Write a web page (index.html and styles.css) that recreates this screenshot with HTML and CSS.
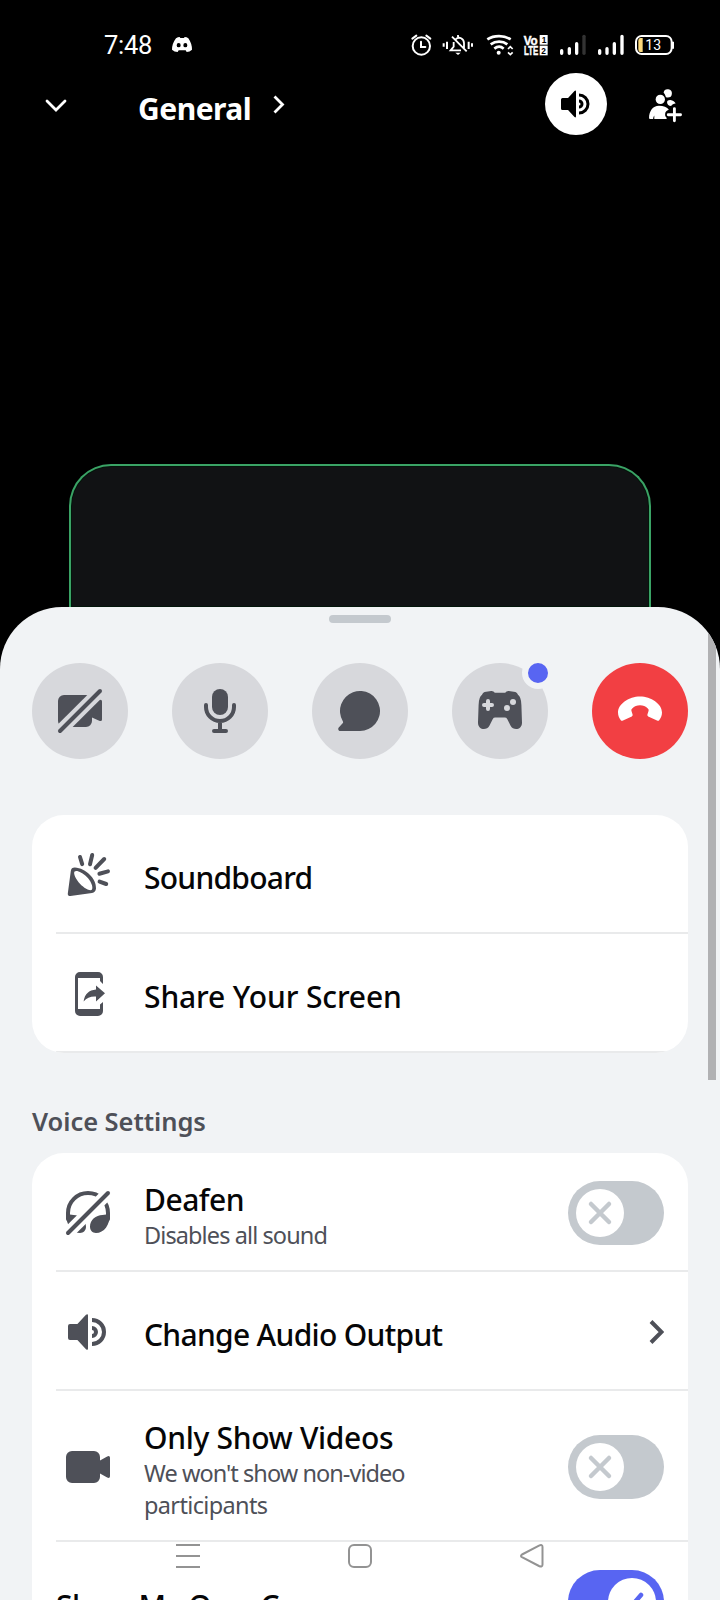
FILE: index.html
```html
<!DOCTYPE html>
<html lang="en">
<head>
<meta charset="utf-8">
<title>Voice channel</title>
<link rel="stylesheet" href="styles.css">
</head>
<body>
<div class="screen">
  <div class="status-bar">
    <span class="clock">7:48</span>
    <svg class="discord" width="20" height="15" viewBox="0 0 60 45"><path fill="#fff" fill-rule="evenodd" d="M12 4 Q18 0 23 0 L25 3 H36 L38 0 Q44 0 49 4 Q60 20 60 38 Q53 45 44 45L41 40H20L17 45Q7 45 0 38Q0 20 12 4ZM20 18a6 6.500 0 0 0 0 13a6 6.500 0 0 0 0-13ZM40 18a6 6.500 0 0 0 0 13a6 6.500 0 0 0 0-13Z"/></svg>
    <svg class="status-icons" width="290" height="50" viewBox="0 0 870 150" fill="none" stroke="#fff" stroke-width="6">
      <circle cx="64" cy="78" r="26"/><path d="M63 65v16h13M37 56l12-9M91 56l-12-9" stroke-linecap="round"/>
      <path d="M131 70v10M141 65v22M206 65v22M216 70v10"/>
      <path d="M156 50l44 44M161 66v14l-9 11h31M167 58c10-10 25-3 25 12v14M174 45v6" stroke-width="5.500"/><path d="M166 98h16l-8 7z" fill="#fff" stroke="none"/>
      <path d="M262 58c20-13 50-13 70 0M272 73c15-11 36-11 50 0M283 86c9-7 20-7 28 0" stroke-width="8"/><circle cx="296" cy="98" r="6" fill="#fff" stroke="none"/>
      <path d="M324 87l7-7l7 7M324 97l7 7l7-7" stroke-width="5"/>
      <g fill="#fff" stroke="#fff" stroke-width="1.500" class="volte">
        <text x="371" y="74" font-size="40" textLength="42" lengthAdjust="spacingAndGlyphs">Vo</text>
        <text x="372" y="106" font-size="40" textLength="43" lengthAdjust="spacingAndGlyphs">LTE</text>
        <g stroke="none"><rect x="419" y="45" width="24" height="29"/><rect x="419" y="77" width="24" height="29"/></g>
        <g fill="#000" stroke="none"><text x="425" y="69" font-size="25">1</text><text x="424" y="101" font-size="25">2</text></g>
      </g>
      <g stroke-width="10" stroke-linecap="round"><path d="M485 92v8M508 86v14M530 71v29"/><path d="M552 49v51" stroke="#333"/><path d="M599 92v8M621 86v14M643 71v29M666 49v51"/></g>
      <rect x="708" y="48" width="107" height="54" rx="17" stroke-width="6"/><path d="M819 65v21" stroke-width="6"/>
      <path d="M728 54h-6q-7 0-7 10v22q0 10 7 10h6z" fill="#fbd97c" stroke="none"/>
      <text class="battery" x="736" y="90" font-size="42" fill="#fff" stroke="none">13</text>
    </svg>
  </div>

  <header class="header">
    <svg class="down" width="22" height="14" viewBox="0 0 22 14"><path d="M2 2l9 9l9-9" fill="none" stroke="#fff" stroke-width="2.800" stroke-linecap="round"/></svg>
    <h1 class="channel">General</h1>
    <svg class="more" width="12" height="19" viewBox="0 0 12 19"><path d="M1.500 1.500l8 8l-8 8" fill="none" stroke="#fff" stroke-width="2.800"/></svg>
    <div class="output">
      <svg width="36" height="36" viewBox="0 0 24 24"><path d="M3 8h3.700l4.300-4.600q1-.8 1 .4v16.400q0 1.200-1 .4L6.700 16H3q-1 0-1-1V9q0-1 1-1Z"/><path d="M14 6a6 6 0 0 1 0 12M14 10a2 2 0 0 1 0 4" fill="none" stroke="#000" stroke-width="2"/></svg>
    </div>
    <svg class="invite" width="36" height="36" viewBox="0 0 24 24" fill="#fff"><circle cx="8.200" cy="7.600" r="3.100"/><path d="M10.400 3a2.800 2.800 0 1 1 2.700 3.400q-.6 0-1.200-.4Q11.400 4 10.400 3ZM12.700 9.500c0-1 1-1.600 2.200-1.500c1.800.2 3 1.200 3.500 2.400c-1.300 0-2.300.6-3 1.600c-1.500 0-2.700-1-2.700-2.500ZM7.300 11.800c3 0 5.500.8 6.600 2.700c-1.700.4-2.500 1.600-2.500 3.200c0 1 .3 1.500 1 2.100v.9H4.200v-2.300q-.7 1-.8 2.300H1.400q-.7 0-.7-.7c0-4.500 2.500-8.200 6.600-8.200Z"/><path d="M17.600 13.700v8.200M13.500 17.800h8.200" stroke="#fff" stroke-width="1.900" stroke-linecap="round"/></svg>
  </header>

  <div class="tile"></div>

  <main class="sheet">
    <div class="handle"></div>
    <div class="actions">
      <button class="action"><svg class="icon" viewBox="0 0 24 24"><mask id="cut"><path fill="#fff" d="M0 0h24v24H0z"/><path d="M0 24L24 0" stroke="#000" stroke-width="6.100"/></mask><path mask="url(#cut)" d="M4 4h11a3 3 0 0 1 3 3v1.800l3.600-2.300q1.400-.5 1.400.7v9q0 1.200-1.400.7L18 15.300V17a3 3 0 0 1-3 3H4a3 3 0 0 1-3-3V7a3 3 0 0 1 3-3Z"/><path class="line" d="M2 22L22 2"/></svg></button>
      <button class="action"><svg class="icon" viewBox="0 0 24 24"><rect x="8" y="1" width="8" height="13" rx="4"/><path class="line" d="M5 9v1a7 7 0 0 0 14 0V9M12 18v4M9 22h6"/></svg></button>
      <button class="action"><svg class="icon" viewBox="0 0 24 24"><path d="M12 22a10 10 0 1 0-8.600-4.900q.4.700-.2 1.200L1.500 20.100C.7 20.900 1.200 22 2.200 22Z"/></svg></button>
      <button class="action"><svg class="icon" viewBox="0 0 24 24"><path d="M4.300 2.500L7.600 2Q8.800 1.900 9.400 2.900H14.600Q15.200 1.900 16.400 2L19.700 2.500Q20.600 2.800 21 3.900Q22.600 5 22.700 9L23 17.800C23.100 21.600 18.600 22 17.300 19.400L15.600 16Q15.200 15.300 14.400 15.300H9.600Q8.800 15.300 8.400 16L6.700 19.400C5.400 22 .9 21.600 1 17.800L1.300 9Q1.400 5 3 3.900Q3.400 2.800 4.300 2.500Z"/><path d="M6 7v4M4 9h4" stroke="#d7d8dc" stroke-width="2" stroke-linecap="round"/><circle cx="18.500" cy="7.500" r="1.500" fill="#d7d8dc"/><circle cx="15.500" cy="10.500" r="1.500" fill="#d7d8dc"/></svg><span class="badge"></span></button>
      <button class="action hangup"><svg class="icon" viewBox="0 0 24 24"><path d="M12 4.800C17.500 4.800 23 8.500 23 12.800C23 14.300 22.400 15.600 21.600 16.600Q21.200 17.100 20.500 16.800L16.100 14.700Q15.500 14.400 15.700 13.800L16.300 11.900Q16.500 11.200 15.900 10.700Q14.300 9.100 12 9.100Q9.700 9.100 8.100 10.700Q7.500 11.200 7.700 11.900L8.300 13.800Q8.500 14.400 7.900 14.700L3.500 16.800Q2.800 17.100 2.400 16.600C1.600 15.600 1 14.300 1 12.800C1 8.500 6.500 4.800 12 4.800Z"/></svg></button>
    </div>

    <section class="card">
      <div class="row">
        <svg class="icon" viewBox="0 0 24 24"><path fill-rule="evenodd" d="M3.400 10Q3.600 8.300 5.400 8.300C11 8.600 16.300 14 16 18.800Q15.800 20.800 14 21L3.200 22.500Q1.800 22.500 1.900 21.200ZM5.300 10.300C4.500 11.200 5.900 14.300 8.100 16.500C10.600 19.100 13.400 20.300 14 19.200C14.700 18 13.400 14.900 11.300 12.900C9.300 10.800 6.200 9.400 5.300 10.300Z"/><path class="line" d="M8 3l1.100 3.600M14.100 2l-1.100 4.600M20.100 4l-4.300 4.400M22 10.200l-4.300 1.200M21.100 16.500l-3.300-1.200"/></svg>
        <span class="label soundboard">Soundboard</span>
      </div>
      <div class="row">
        <svg class="icon" viewBox="0 0 24 24"><path d="M8 1h9a2.500 2.500 0 0 1 2.500 2.500V7L18 5.500V4H7v15.500h11v-2.200L19.500 16v4.500A2.500 2.500 0 0 1 17 23H8a2.500 2.500 0 0 1-2.500-2.500v-17A2.500 2.500 0 0 1 8 1Z"/><path d="M20.500 11.600L16 15.800v-2.500Q12.200 13 9.800 15.700C10.300 12 12.500 10 16 9.700v-2Z"/></svg>
        <span class="label share">Share Your Screen</span>
      </div>
    </section>

    <h2 class="heading">Voice Settings</h2>
    <section class="card">
      <div class="row">
        <svg class="icon" viewBox="0 0 24 24"><g mask="url(#cut)"><path d="M2 15v-3a10 10 0 0 1 20 0v3" class="line"/><path d="M23 12.500C23 18 20 22 16 22C14.200 22 13 20.700 13 18.900C13 15.500 16 13 19.200 13ZM1 12.500C1 18 4 22 8 22C9.800 22 11 20.700 11 18.900C11 15.500 8 13 4.800 13Z"/></g><path class="line" d="M2 22L22 2"/></svg>
        <div class="text"><span class="label deafen">Deafen</span><span class="note deafen-note">Disables all sound</span></div>
        <span class="toggle"><span class="knob"><svg width="48" height="48" viewBox="0 0 48 48"><path d="M15 15l18 18M33 15l-18 18"/></svg></span></span>
      </div>
      <div class="row">
        <svg class="icon" viewBox="0 0 24 24"><path d="M3 8h3.700l4.300-4.600q1-.8 1 .4v16.400q0 1.200-1 .4L6.700 16H3q-1 0-1-1V9q0-1 1-1Z"/><path d="M14 6a6 6 0 0 1 0 12M14 10a2 2 0 0 1 0 4" fill="none" stroke="#4e5058" stroke-width="2"/></svg>
        <span class="label audio">Change Audio Output</span>
        <svg class="chevron" width="16" height="26" viewBox="0 0 16 26"><path d="M3 2.500l10.500 10.500L3 23.500" fill="none" stroke="#4e5058" stroke-width="4"/></svg>
      </div>
      <div class="row tall">
        <svg class="icon" viewBox="0 0 24 24"><path d="M4 4h11a3 3 0 0 1 3 3v1.800l3.600-2.100q1.400-.5 1.400.7v9.200q0 1.200-1.400.7L18 15.300V17a3 3 0 0 1-3 3H4a3 3 0 0 1-3-3V7a3 3 0 0 1 3-3Z"/></svg>
        <div class="text"><span class="label videos">Only Show Videos</span><span class="note videos-note">We won't show non-video<br><span class="second">participants</span></span></div>
        <span class="toggle"><span class="knob"><svg width="48" height="48" viewBox="0 0 48 48"><path d="M15 15l18 18M33 15l-18 18"/></svg></span></span>
      </div>
      <div class="row last">
        <span class="label camera">Show My Own Camera</span>
        <span class="toggle on"><span class="knob"><svg width="48" height="48" viewBox="0 0 48 48"><path d="M14 25l6 7L33 17"/></svg></span></span>
      </div>
    </section>
    <div class="scrollbar"></div>
  </main>

  <nav class="nav">
    <svg width="26" height="26" viewBox="0 0 26 26"><path d="M1 2h24M1 13h24M1 24h24"/></svg>
    <svg width="26" height="26" viewBox="0 0 26 26"><rect x="2" y="2" width="22" height="22" rx="5"/></svg>
    <svg width="26" height="26" viewBox="0 0 26 26"><path d="M3 11.500L20 2.600q3.500-1.600 3.500 1.400v17.500q0 3-3.500 1.500L3 14.200q-2-1.200 0-2.700Z"/></svg>
  </nav>
</div>
</body>
</html>
```
FILE: styles.css
```css
* { box-sizing: border-box; }
body { margin: 0; background: #000; font-family: "Noto Sans", sans-serif; }
.screen { position: relative; width: 720px; height: 1600px; overflow: hidden; background: #000; }

.status-bar { display: flex; height: 73px; color: #fff; }
.clock { width: 68px; margin: 30px 0 0 104px; font: 400 25.500px/31px Roboto, sans-serif; letter-spacing: -.3px; }
.discord { margin-top: 37px; }
.status-icons { margin: 20px 0 0 208px; }
.volte { font-family: "Liberation Sans", sans-serif; font-weight: bold; }
.battery { font-family: Roboto, sans-serif; font-weight: 400; }

.header { display: flex; height: 62px; color: #fff; }
.down { margin: 26px 0 0 45px; }
.channel { width: 135px; margin: 16px 0 0 71px; font-size: 30px; line-height: 40px; font-weight: 700; letter-spacing: -.5px; }
.more { margin-top: 22px; }
.output { display: flex; width: 62px; height: 62px; margin-left: 260px; padding: 13px; border-radius: 50%; background: #fff; }
.invite { margin: 15px 0 0 41px; }

.tile { width: 582px; height: 143px; margin: 329px 0 0 69px; border: 2px solid #3aa365; border-bottom: 0; border-radius: 42px 42px 0 0; background: #111214; box-shadow: inset 0 0 0 1px #03150a; }

.sheet { position: relative; height: 993px; padding: 8px 32px 0; overflow: hidden; border-radius: 62px 62px 0 0; background: #f1f3f5; }
.handle { width: 62px; height: 8px; margin: 0 auto 40px; border-radius: 4px; background: #c4c9ce; }
.actions { display: flex; justify-content: space-between; margin-bottom: 56px; }
.action { position: relative; display: flex; width: 96px; height: 96px; padding: 24px; border: 0; border-radius: 50%; background: #d7d8dc; }
.icon { width: 48px; height: 48px; flex: none; fill: #4e5058; }
.line { fill: none; stroke: #4e5058; stroke-width: 2; stroke-linecap: round; }
.hangup { background: #f23f43; }
.hangup .icon { fill: #fff; }
.badge { position: absolute; top: -6px; right: -6px; width: 32px; height: 32px; border: 6px solid #f1f3f5; border-radius: 50%; background: #5865f2; }

.card { padding-left: 24px; overflow: hidden; border-radius: 32px; background: #fff; }
.row { display: flex; align-items: center; height: 119px; padding: 2px 24px 0 8px; border-bottom: 2px solid #e9eaeb; }
.row .icon { margin-right: 32px; }
.text { display: flex; flex-direction: column; padding-top: 6px; }
.label { color: #060607; font-size: 30px; line-height: 38px; font-weight: 500; white-space: nowrap; }
.note { color: #4e5058; font-size: 23.500px; line-height: 32px; white-space: nowrap; }
.row > .label { padding-top: 6px; }
.soundboard { letter-spacing: -.75px; }
.share { letter-spacing: -.12px; }
.deafen { letter-spacing: -.5px; }
.deafen-note { letter-spacing: -.9px; }
.audio { letter-spacing: -.69px; }
.videos { letter-spacing: -.32px; }
.videos-note { letter-spacing: -.95px; }
.second { letter-spacing: -.65px; }
.heading { margin: 51px 0 15px; color: #4e5058; font-size: 25.500px; line-height: 34px; font-weight: 600; letter-spacing: -.05px; }
.chevron { margin: 1px 0 0 auto; }
.tall { height: 151px; }
.last { align-items: flex-start; height: 160px; padding: 28px 24px 0 0; }
.row > .camera { padding-top: 17px; letter-spacing: -.5px; }

.toggle { display: flex; width: 96px; height: 64px; margin-left: auto; padding: 8px; border-radius: 32px; background: #c4c9ce; }
.knob { width: 48px; height: 48px; border-radius: 50%; background: #fff; }
.knob path { fill: none; stroke: #c4c9ce; stroke-width: 4.500; stroke-linecap: round; }
.on { justify-content: flex-end; background: #5865f2; }
.on .knob path { stroke: #5865f2; }

.scrollbar { position: absolute; top: 0; right: 4px; width: 8px; height: 473px; background: #b1b1b3; }
.nav { position: absolute; left: 175px; top: 1543px; display: flex; gap: 146px; }
.nav svg { fill: none; stroke: #939393; stroke-width: 2; }
```
